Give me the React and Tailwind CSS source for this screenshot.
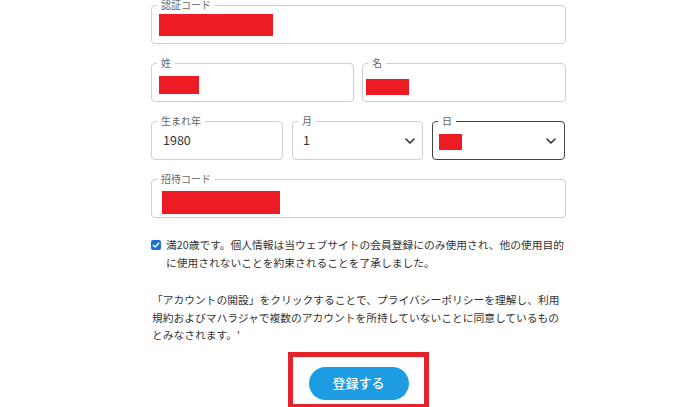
import React from "react";

const font = { fontFamily: '"Noto Sans CJK JP", "Noto Sans", Roboto, sans-serif' };

function Label({ children }) {
  return (
    <span className="absolute left-[5px] top-[-7px] h-[12px] px-[4px] bg-white text-[10px] leading-[12px] text-[#666]">
      {children}
    </span>
  );
}

function Chevron() {
  return (
    <svg width="10" height="6" viewBox="0 0 10 6" className="shrink-0">
      <path d="M1 1 L5 5 L9 1" fill="none" stroke="#333" strokeWidth="1.6" strokeLinecap="round" strokeLinejoin="round" />
    </svg>
  );
}

export default function App() {
  return (
    <div className="w-[700px] h-[407px] bg-white overflow-hidden" style={font}>
      <div className="ml-[151px] w-[415px] pt-[5px]">
        {/* 認証コード */}
        <div className="relative h-[39px] border border-[#cfcfcf] rounded-[4px] flex items-center pl-[7px]">
          <Label>認証コード</Label>
          <div className="w-[114px] h-[22px] bg-[#ed1c24]" />
        </div>

        {/* 姓 / 名 */}
        <div className="mt-[19px] flex gap-[8px]">
          <div className="relative w-[203px] h-[39px] border border-[#cfcfcf] rounded-[4px] pl-[7px] pt-[12px]">
            <Label>姓</Label>
            <div className="w-[40px] h-[18px] bg-[#ed1c24]" />
          </div>
          <div className="relative w-[204px] h-[39px] border border-[#cfcfcf] rounded-[4px] pl-[3px] pt-[15px]">
            <Label>名</Label>
            <div className="w-[43px] h-[16px] bg-[#ed1c24]" />
          </div>
        </div>

        {/* 生まれ年 / 月 / 日 */}
        <div className="mt-[19px] flex gap-[9px]">
          <div className="relative w-[132px] h-[39px] border border-[#cfcfcf] rounded-[4px] flex items-center pl-[11px]">
            <Label>生まれ年</Label>
            <span className="text-[12.5px] text-[#333]">1980</span>
          </div>
          <div className="relative w-[131px] h-[39px] border border-[#cfcfcf] rounded-[4px] flex items-center justify-between pl-[10px] pr-[7px]">
            <Label>月</Label>
            <span className="text-[12.5px] text-[#333]">1</span>
            <Chevron />
          </div>
          <div className="relative w-[133px] h-[39px] border border-[#444] rounded-[4px] flex items-center justify-between pl-[6px] pr-[8px]">
            <Label>日</Label>
            <div className="w-[23px] h-[16px] bg-[#ed1c24] mt-[3px]" />
            <Chevron />
          </div>
        </div>

        {/* 招待コード */}
        <div className="relative mt-[19px] h-[39px] border border-[#cfcfcf] rounded-[4px] pl-[10px] pt-[11px]">
          <Label>招待コード</Label>
          <div className="w-[118px] h-[23px] bg-[#ed1c24]" />
        </div>

        {/* checkbox */}
        <div className="mt-[18px] flex items-start gap-[5px] text-[10.75px] leading-[17.5px] text-[#333]">
          <div className="mt-[4px] w-[10px] h-[10px] rounded-[2px] bg-[#1a6fd6] flex items-center justify-center shrink-0">
            <svg width="8" height="8" viewBox="0 0 8 8">
              <path d="M1.3 4.2 L3.2 6 L6.8 2" fill="none" stroke="#fff" strokeWidth="1.4" strokeLinecap="round" strokeLinejoin="round" />
            </svg>
          </div>
          <p className="whitespace-nowrap">
            満20歳です。個人情報は当ウェブサイトの会員登録にのみ使用され、他の使用目的
            <br />
            に使用されないことを約束されることを了承しました。
          </p>
        </div>

        {/* notice */}
        <p className="mt-[20px] pl-[1px] whitespace-nowrap text-[10.75px] leading-[17.5px] text-[#333]">
          「アカウントの開設」をクリックすることで、プライバシーポリシーを理解し、利用
          <br />
          規約およびマハラジャで複数のアカウントを所持していないことに同意しているもの
          <br />
          とみなされます。'
        </p>

        {/* button */}
        <div className="mt-[8px] mx-auto w-[141px] h-[57px] border-[5px] border-[#e4222a] flex justify-center pt-[10px]">
          <button className="w-[100px] h-[33px] rounded-full bg-[#1d9be3] text-white text-[13px] font-medium">
            登録する
          </button>
        </div>
      </div>
    </div>
  );
}
